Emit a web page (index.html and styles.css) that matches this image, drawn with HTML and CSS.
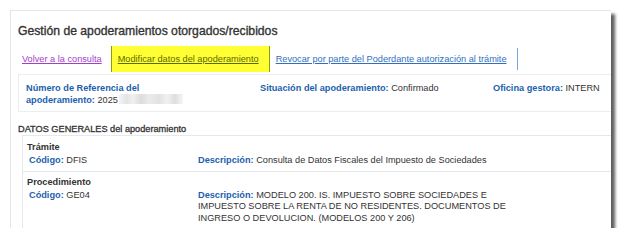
FILE: index.html
```html
<!DOCTYPE html>
<html lang="es">
<head>
<meta charset="UTF-8">
<meta name="viewport" content="width=device-width, initial-scale=1.0">
<title>Gestión de apoderamientos</title>
<link rel="stylesheet" href="styles.css">
</head>
<body>
    <div class="card">
        <h1 class="title">Gestión de apoderamientos otorgados/recibidos</h1>

        <div class="tabs">
            <a class="tab visited" href="#">Volver a la consulta</a>
            <a class="tab active" href="#">Modificar datos del apoderamiento</a>
            <a class="tab last" href="#">Revocar por parte del Poderdante autorización al trámite</a>
        </div>

        <div class="info">
            <div class="info-ref">
                <span class="lbl">Número de Referencia del apoderamiento:</span> 2025<span class="blur"></span>
            </div>
            <div class="info-state">
                <span class="lbl">Situación del apoderamiento:</span> Confirmado
            </div>
            <div class="info-office">
                <span class="lbl">Oficina gestora:</span> INTERN
            </div>
        </div>

        <h2 class="section">DATOS GENERALES del apoderamiento</h2>

        <div class="data">
            <div class="group">
                <div class="group-title">Trámite</div>
                <div class="row">
                    <div class="code"><span class="lbl">Código:</span> DFIS</div>
                    <div class="desc"><span class="lbl">Descripción:</span> Consulta de Datos Fiscales del Impuesto de Sociedades</div>
                </div>
            </div>
            <div class="group">
                <div class="group-title">Procedimiento</div>
                <div class="row">
                    <div class="code"><span class="lbl">Código:</span> GE04</div>
                    <div class="desc"><span class="lbl">Descripción:</span> MODELO 200. IS. IMPUESTO SOBRE SOCIEDADES E IMPUESTO SOBRE LA RENTA DE NO RESIDENTES. DOCUMENTOS DE INGRESO O DEVOLUCION. (MODELOS 200 Y 206)</div>
                </div>
            </div>
        </div>
    </div>
</body>
</html>
```

FILE: styles.css
```css
body {
    margin: 0;
    padding: 10px 0 0 10px;
    background: #fff;
    font-family: "Liberation Sans", Arial, sans-serif;
    font-size: 9.2px;
    color: #333;
}
.card {
    width: 601px;
    height: 218px;
    overflow: hidden;
    background: #fff;
    border-top: 1px solid #e6e6e6;
    border-left: 1px solid #e6e6e6;
    box-shadow: 4px 4px 3px rgba(40, 40, 40, 0.75);
    box-sizing: border-box;
}
.title {
    margin: 12px 0 0 7px;
    font-size: 12.2px;
    line-height: 16px;
    font-weight: normal;
    color: #333;
    -webkit-text-stroke: 0.35px #333;
}
.tabs {
    display: flex;
    align-items: center;
    margin: 7px 0 0 7px;
    height: 26px;
    white-space: nowrap;
}
.tab {
    flex-shrink: 0;
    line-height: 26px;
}
.visited {
    color: #a23ec9;
    padding: 0 9px 0 4px;
}
.active {
    color: #5a6b00;
    background: #ffff33;
    border-left: 1px solid #8aa000;
    border-right: 1px solid #8aa000;
    padding: 0 10px 0 6px;
}
.last {
    color: #2f6fc2;
    margin-left: 6px;
    padding-right: 10px;
    line-height: 22px;
    border-right: 1px solid #7aa4d6;
}
.info {
    display: flex;
    margin: 2px 0 0 7px;
    padding: 7px 7px 5px;
    border: 1px solid #e9eef3;
    border-right: none;
    line-height: 12px;
}
.info > div {
    flex-shrink: 0;
}
.lbl {
    color: #1d5fae;
    font-weight: bold;
}
.info-ref {
    width: 234px;
    padding-right: 60px;
    box-sizing: border-box;
}
.blur {
    display: inline-block;
    width: 64px;
    height: 10px;
    margin-left: 1px;
    vertical-align: -1px;
    background: linear-gradient(90deg, #f4f4f4 0, #e4e4e4 8px, #f0f0f0 14px, #dcdcdc 22px, #ebebeb 30px, #e2e2e2 40px, #f1f1f1 48px, #dedede 56px, #f6f6f6 64px);
}
.info-state {
    width: 233px;
}
.section {
    margin: 11px 0 0 7px;
    font-size: 9.2px;
    line-height: 12px;
    font-weight: normal;
    color: #333;
    -webkit-text-stroke: 0.3px #333;
}
.data {
    margin: 0 0 0 11px;
    border: 1px solid #e3e9ef;
    border-right: none;
}
.group {
    padding: 5px 4px 4px;
}
.group + .group {
    border-top: 1px solid #e3e9ef;
    padding-top: 4px;
}
.group-title {
    font-weight: bold;
    color: #333;
    line-height: 12px;
}
.row {
    display: flex;
    padding: 0 2px;
    line-height: 11.5px;
    margin-top: 2px;
}
.code {
    flex-shrink: 0;
    width: 169px;
}
.desc {
    flex-shrink: 0;
    width: 315px;
}
```
